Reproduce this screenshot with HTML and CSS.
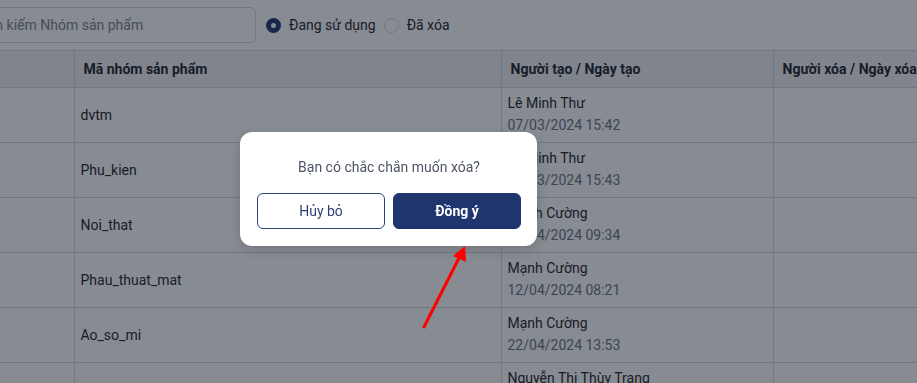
FILE: index.html
```html
<!DOCTYPE html>
<html lang="vi">
<head>
<meta charset="utf-8">
<link rel="stylesheet" href="styles.css">
</head>
<body>
<div class="page">
  <div class="toolbar">
    <input class="search" type="text" placeholder="Tìm kiếm Nhóm sản phẩm">
    <label class="radio"><span class="dot checked"></span>Đang sử dụng</label>
    <label class="radio"><span class="dot"></span>Đã xóa</label>
  </div>
  <table class="grid">
    <colgroup>
      <col class="c1"><col class="c2"><col class="c3"><col class="c4">
    </colgroup>
    <thead>
      <tr><th></th><th>Mã nhóm sản phẩm</th><th>Người tạo / Ngày tạo</th><th>Người xóa / Ngày xóa</th></tr>
    </thead>
    <tbody>
      <tr><td></td><td>dvtm</td><td class="meta"><div class="who">Lê Minh Thư</div><div class="when">07/03/2024 15:42</div></td><td></td></tr>
      <tr><td></td><td>Phu_kien</td><td class="meta"><div class="who">Lê Minh Thư</div><div class="when">07/03/2024 15:43</div></td><td></td></tr>
      <tr><td></td><td>Noi_that</td><td class="meta"><div class="who">Mạnh Cường</div><div class="when">11/04/2024 09:34</div></td><td></td></tr>
      <tr><td></td><td>Phau_thuat_mat</td><td class="meta"><div class="who">Mạnh Cường</div><div class="when">12/04/2024 08:21</div></td><td></td></tr>
      <tr><td></td><td>Ao_so_mi</td><td class="meta"><div class="who">Mạnh Cường</div><div class="when">22/04/2024 13:53</div></td><td></td></tr>
      <tr><td></td><td>my_khoa</td><td class="meta"><div class="who">Nguyễn Thị Thùy Trang</div><div class="when">25/04/2024 10:12</div></td><td></td></tr>
    </tbody>
  </table>
</div>
<div class="overlay"></div>
<div class="modal">
  <p class="msg">Bạn có chắc chắn muốn xóa?</p>
  <div class="actions">
    <button class="btn cancel">Hủy bỏ</button>
    <button class="btn ok">Đồng ý</button>
  </div>
</div>
<svg class="arrow" width="917" height="383" viewBox="0 0 917 383">
  <line x1="424" y1="327" x2="459" y2="258" stroke="#ff0000" stroke-width="3" stroke-linecap="round"/>
  <polygon points="465,246 466,262 453,256" fill="#ff0000"/>
</svg>
</body>
</html>
```
FILE: styles.css
```css
html, body {
  margin: 0;
  padding: 0;
  width: 917px;
  height: 383px;
  overflow: hidden;
  background: #ffffff;
  font-family: Roboto, "Liberation Sans", sans-serif;
  font-size: 14px;
  color: #1f2329;
}
.page {
  display: flex;
  flex-direction: column;
}
.toolbar {
  display: flex;
  align-items: center;
  height: 50px;
  margin-left: -34px;
}
.search {
  box-sizing: border-box;
  width: 290px;
  height: 36px;
  border: 1px solid #d4d7dc;
  border-radius: 6px;
  padding: 0 12px;
  font-family: inherit;
  font-size: 14px;
  color: #1f2329;
  margin-right: 10px;
}
.search::placeholder { color: #7d828b; }
.radio {
  display: flex;
  align-items: center;
  gap: 8px;
  margin-right: 8px;
  color: #1f2329;
}
.dot {
  box-sizing: border-box;
  width: 15px;
  height: 15px;
  border-radius: 50%;
  border: 1px solid #d4d7dc;
  background: #fff;
}
.dot.checked {
  border: 5px solid #1f356e;
  background: #fff;
}
.grid {
  border-collapse: collapse;
  table-layout: fixed;
  width: 933px;
}
.c1 { width: 74px; }
.c2 { width: 427px; }
.c3 { width: 272px; }
.c4 { width: 160px; }
.grid th {
  background: #f0f2f5;
  height: 36px;
  text-align: left;
  font-weight: 700;
  padding: 0 9px;
  border: 1px solid #d4d7dc;
  white-space: nowrap;
  color: #1f2329;
}
.grid td {
  height: 54px;
  border: 1px solid #d4d7dc;
  padding: 0 6px;
  vertical-align: middle;
  white-space: nowrap;
}
.grid td.meta { vertical-align: top; }
.grid th:first-child, .grid td:first-child { border-left: none; }
.who { line-height: 22px; padding-top: 4px; }
.when { line-height: 22px; color: #6b7280; }
.overlay {
  position: fixed;
  inset: 0;
  background: rgba(16, 23, 38, 0.5);
}
.modal {
  position: fixed;
  left: 240px;
  top: 132px;
  width: 297px;
  height: 114px;
  box-sizing: border-box;
  background: #fff;
  border-radius: 12px;
  padding: 25px 16px 17px 17px;
  box-shadow: 0 4px 12px rgba(0, 0, 0, 0.15);
}
.msg {
  margin: 0;
  text-align: center;
  line-height: 20px;
  color: #4b5563;
}
.actions {
  display: flex;
  gap: 8px;
  margin-top: 16px;
}
.btn {
  box-sizing: border-box;
  width: 128px;
  height: 36px;
  border-radius: 6px;
  font-family: inherit;
  font-size: 14px;
}
.cancel {
  background: #fff;
  border: 1px solid #2d4373;
  color: #2d4373;
}
.ok {
  background: #1f356e;
  border: 1px solid #1f356e;
  color: #fff;
  font-weight: 700;
}
.arrow {
  position: fixed;
  left: 0;
  top: 0;
}
```
